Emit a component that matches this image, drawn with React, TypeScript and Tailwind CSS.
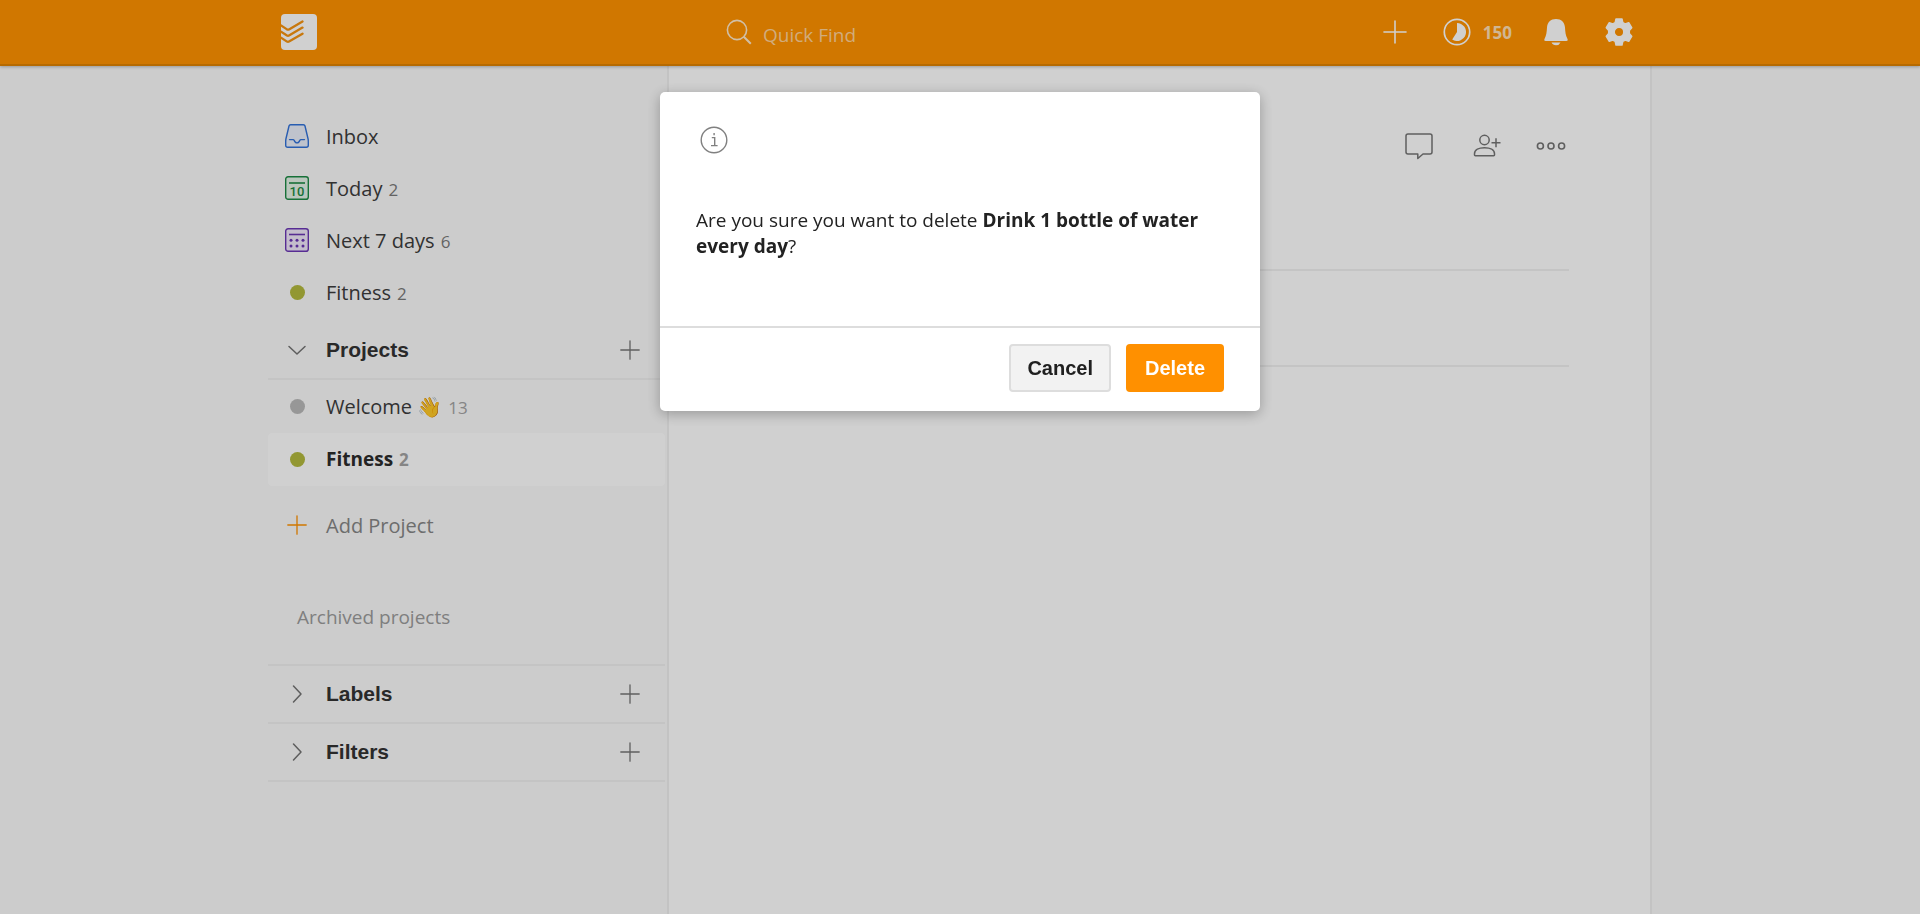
import type { ReactNode } from "react";

function PlusIcon({ className }: { className?: string }) {
  return (
    <svg viewBox="0 0 20 20" fill="none" stroke="currentColor" strokeWidth="1.3" strokeLinecap="round" className={className} aria-hidden="true">
      <path d="M10 .8v18.4M.8 10h18.4" />
    </svg>
  );
}

function Logo() {
  return (
    <svg viewBox="0 0 36 36" className="size-9" aria-hidden="true">
      <rect width="36" height="36" rx="4" fill="#fff" />
      <g fill="none" stroke="#f59310" strokeWidth="2.3" strokeLinejoin="round" strokeLinecap="round">
        <path d="M0 11.500l6 3.900q1 .6 2 0L21.500 7.500" />
        <path d="M0 17.600l6 3.900q1 .6 2 0L21.500 13.600" />
        <path d="M0 23.700l6 3.900q1 .6 2 0L21.500 19.700" />
      </g>
    </svg>
  );
}

function InboxIcon() {
  return (
    <svg viewBox="0 0 24 24" className="size-6" fill="none" stroke="#3272d9" strokeWidth="1.4" strokeLinejoin="round" strokeLinecap="round" aria-hidden="true">
      <path d="M5.600.7h12.800q1.300 0 1.600 1.300L23.100 15c.2 1 .2 2 .2 3v3.300q0 2-2 2H2.700q-2 0-2-2V18c0-1 0-2 .2-3L4 2Q4.300.7 5.600.7z" fill="#dbe6fa" fillOpacity=".5" />
      <path d="M4.500 15.600h3.600q.7 0 1 .7.900 2.600 2.900 2.600t2.900-2.600q.3-.7 1-.7h3.600" />
    </svg>
  );
}

function TodayIcon() {
  return (
    <svg viewBox="0 0 24 24" className="size-6" aria-hidden="true">
      <rect x=".7" y=".7" width="22.600" height="22.600" rx="2.400" fill="#dcf0e0" fillOpacity=".7" stroke="#1d8a45" strokeWidth="1.4" />
      <path d="M4 7h16" stroke="#1d8a45" strokeWidth="1.6" />
      <text x="12" y="19.700" textAnchor="middle" fontFamily="Roboto, sans-serif" fontWeight="500" fontSize="13" fill="#1d8a45">10</text>
    </svg>
  );
}

function WeekIcon() {
  return (
    <svg viewBox="0 0 24 24" className="size-6" aria-hidden="true">
      <rect x=".7" y=".7" width="22.600" height="22.600" rx="2.400" fill="#ece0fa" fillOpacity=".7" stroke="#6b37b5" strokeWidth="1.4" />
      <path d="M4 6.500h16" stroke="#6b37b5" strokeWidth="1.6" />
      <g fill="#6b37b5">
        <circle cx="6" cy="12.300" r="1.500" /><circle cx="12" cy="12.300" r="1.500" /><circle cx="18" cy="12.300" r="1.500" />
        <circle cx="6" cy="18" r="1.500" /><circle cx="12" cy="18" r="1.500" /><circle cx="18" cy="18" r="1.500" />
      </g>
    </svg>
  );
}

function Chevron({ open }: { open?: boolean }) {
  return (
    <svg viewBox="0 0 24 24" className="size-6" fill="none" stroke="#737373" strokeWidth="1.5" strokeLinecap="round" strokeLinejoin="round" aria-hidden="true">
      <path d={open ? "M4 8.500l8 7.500 8-7.500" : "M8.500 4l7.500 8-7.500 8"} />
    </svg>
  );
}

function Dot({ className }: { className: string }) {
  return (
    <span className="flex size-6 items-center justify-center">
      <span className={`size-[15px] rounded-full ${className}`} />
    </span>
  );
}

type NavRowProps = { icon: ReactNode; label: string; count?: number; active?: boolean; project?: boolean };

function NavRow({ icon, label, count, active, project }: NavRowProps) {
  return (
    <li>
      <a
        href="#"
        className={`flex items-center gap-[17px] rounded pl-[17px] ${project ? "h-[53px]" : "h-[52px]"} ${active ? "bg-white text-[19px] font-bold text-[#2b2b2b]" : "text-[20px] text-[#3d3d3d]"}`}
      >
        {icon}
        <span className={`flex items-baseline gap-1.5 ${project ? "" : "pt-0.5"}`}>
          <span>{label}</span>
          {count !== undefined && <span className={`text-[17px] ${project ? "text-[#a3a3a3]" : "text-[#7a7a7a]"}`}>{count}</span>}
        </span>
      </a>
    </li>
  );
}

function SectionHeader({ label, open }: { label: string; open?: boolean }) {
  return (
    <div className="flex h-[58px] items-center border-b-2 border-[#f1f1f1] pr-[25px] pl-[17px]">
      <button type="button" aria-expanded={!!open} className="flex flex-1 items-center gap-[17px] text-left font-['Liberation_Sans',sans-serif] text-[21px] font-bold text-[#333]">
        <Chevron open={open} />
        {label}
      </button>
      <button type="button" aria-label={`Add to ${label}`} className="text-[#757575]">
        <PlusIcon className="size-5" />
      </button>
    </div>
  );
}

function Header() {
  return (
    <header className="relative h-[66px] border-b-2 border-[#e08200] bg-[#ff9200] shadow-[0_1px_3px_rgba(0,0,0,0.25)]">
      <div className="mx-auto flex h-full max-w-[1384px] items-center pr-[19px] pl-[13px] text-white">
        <a href="#" aria-label="Home" className="mr-[409px]"><Logo /></a>
        <label className="flex items-center gap-[11px]">
          <svg viewBox="0 0 26 26" className="size-[26px] text-[#ffeacc]" fill="none" stroke="currentColor" strokeWidth="1.600" aria-hidden="true">
            <circle cx="11" cy="11" r="9.600" />
            <path d="M17.800 17.800l7 7" strokeWidth="2" />
          </svg>
          <input type="search" aria-label="Quick Find" placeholder="Quick Find" className="w-60 bg-transparent pt-1.5 text-[19px] outline-none placeholder:text-[#ffd399]" />
        </label>
        <div className="ml-auto flex items-center">
          <button type="button" aria-label="Add task" className="mr-9"><PlusIcon className="size-6" /></button>
          <button type="button" className="mr-8 flex items-center gap-3">
            <svg viewBox="0 0 28 28" className="size-7" aria-hidden="true">
              <circle cx="14" cy="14" r="12.700" fill="none" stroke="#fff" strokeWidth="1.700" />
              <path d="M14 5a9 9 0 1 1-4.800 16.600L14 14z" fill="#fff" />
            </svg>
            <span className="pt-0.5 text-[17px] font-bold text-[#ffe0b5]">150</span>
          </button>
          <button type="button" aria-label="Notifications" className="mr-[37px]">
            <svg viewBox="0 0 24 28" className="h-7 w-6" fill="#fff" aria-hidden="true">
              <path d="M12 1c5.300 0 8.700 3.300 9 8.500.300 5 .600 7.500 2.500 11.500.500 1.300.200 2-1.200 2H1.700C.300 23 0 22.300.500 21 2.400 17 2.700 14.500 3 9.500 3.300 4.300 6.700 1 12 1z" />
              <path d="M7.500 24.500h9q-1.300 2.800-4.500 2.800t-4.500-2.800z" />
            </svg>
          </button>
          <button type="button" aria-label="Settings">
            <svg viewBox="0 0 28 28" className="size-7" aria-hidden="true">
              <path fillRule="evenodd" fill="#fff" stroke="#fff" strokeWidth="1.500" strokeLinejoin="round" d="M11 1h6l.8 3.600 2.400 1.300 3.500-1.200 3 5-2.400 2.700v3.200l2.400 2.700-3 5-3.500-1.200-2.400 1.300L17 27h-6l-.8-3.600-2.400-1.300-3.500 1.200-3-5 2.400-2.700v-3.200L1.300 9.700l3-5 3.500 1.200 2.400-1.300zM14 9.200a4.800 4.800 0 1 0 0 9.600 4.800 4.800 0 0 0 0-9.600z" />
            </svg>
          </button>
        </div>
      </div>
    </header>
  );
}

function Sidebar() {
  return (
    <nav className="w-[399px] shrink-0 pt-11 pr-0.5">
      <ul className="pb-1">
        <NavRow icon={<InboxIcon />} label="Inbox" />
        <NavRow icon={<TodayIcon />} label="Today" count={2} />
        <NavRow icon={<WeekIcon />} label="Next 7 days" count={6} />
        <NavRow icon={<Dot className="bg-[#b3b93e]" />} label="Fitness" count={2} />
      </ul>
      <SectionHeader label="Projects" open />
      <ul>
        <NavRow icon={<Dot className="bg-[#bababa]" />} label="Welcome 👋" count={13} project />
        <NavRow icon={<Dot className="bg-[#b3b93e]" />} label="Fitness" count={2} active project />
      </ul>
      <button type="button" className="mt-3 flex h-[53px] w-full items-center gap-[17px] pl-[17px] text-[20px] text-[#868686]">
        <span className="flex size-6 items-center justify-center text-[#ff9200]"><PlusIcon className="size-5" /></span>
        <span className="pt-0.5">Add Project</span>
      </button>
      <a href="#" className="mt-10 block h-[53px] pl-[29px] text-[19px] leading-[52px] text-[#9c9c9c]">Archived projects</a>
      <div className="mt-5 border-t-2 border-[#f1f1f1]">
        <SectionHeader label="Labels" />
        <SectionHeader label="Filters" />
      </div>
    </nav>
  );
}

function ProjectView() {
  return (
    <main className="flex-1 border-x-2 border-[#f0f0f0] bg-white pr-[81px] pl-20">
      <div className="flex h-[205px] items-start justify-end border-b-2 border-[#f1f1f1] pt-[66px]">
        <div className="flex items-center pr-[3px] text-[#757575]">
          <button type="button" aria-label="Comments" className="mr-10">
            <svg viewBox="0 0 28 28" className="size-7" fill="none" stroke="currentColor" strokeWidth="1.500" strokeLinejoin="round" aria-hidden="true">
              <path d="M3 2h22q2 0 2 2v16q0 2-2 2h-7l-5.200 4.500V22H3q-2 0-2-2V4q0-2 2-2z" />
            </svg>
          </button>
          <button type="button" aria-label="Share" className="mr-[35px]">
            <svg viewBox="0 0 28 28" className="size-7" fill="none" stroke="currentColor" strokeWidth="1.500" strokeLinejoin="round" aria-hidden="true">
              <circle cx="11.500" cy="8" r="4.700" />
              <path d="M1.500 23v-1.300c0-4 4.500-6 10-6s10 2 10 6V23q0 .7-.8.700H2.300q-.8 0-.8-.7zM18.500 10.800h9M23 6.300v9" />
            </svg>
          </button>
          <button type="button" aria-label="More actions">
            <svg viewBox="0 0 30 28" className="h-7 w-[30px]" fill="none" stroke="currentColor" strokeWidth="1.600" aria-hidden="true">
              <circle cx="4.400" cy="14" r="3" /><circle cx="15" cy="14" r="3" /><circle cx="25.600" cy="14" r="3" />
            </svg>
          </button>
        </div>
      </div>
      <div className="h-24 border-b-2 border-[#f1f1f1]" />
    </main>
  );
}

function ConfirmDialog() {
  return (
    <div className="fixed inset-0 flex items-start justify-center bg-black/[0.184] pt-[92px]">
      <section role="alertdialog" aria-modal="true" aria-describedby="confirm-text" className="w-[600px] rounded-[5px] bg-white shadow-[0_3px_14px_rgba(0,0,0,0.28)]">
        <div className="px-9 pt-[34px] pb-[67px]">
          <svg viewBox="0 0 28 28" className="ml-1 size-7" fill="none" stroke="#808080" strokeWidth="1.400" aria-hidden="true">
            <circle cx="14" cy="14" r="12.800" />
            <path d="M11.800 11.600h2.900v8M11 19.600h6.600M14.100 7v2.200" />
          </svg>
          <p id="confirm-text" className="mt-[53px] text-[19px] leading-[26px] text-[#222]">
            Are you sure you want to delete <strong>Drink 1 bottle of water every day</strong>?
          </p>
        </div>
        <div className="flex justify-end gap-[15px] border-t-2 border-[#ddd] px-9 pt-4 pb-[19px] font-['Liberation_Sans',sans-serif] text-[20px] font-bold">
          <button type="button" className="h-12 rounded border-2 border-[#ddd] bg-[#f2f2f2] px-4 text-[#202020]">Cancel</button>
          <button type="button" className="h-12 rounded bg-[#ff9000] px-[19px] text-white">Delete</button>
        </div>
      </section>
    </div>
  );
}

export default function App() {
  return (
    <div className="flex min-h-screen flex-col bg-[#fafafa] font-['Open_Sans',sans-serif]">
      <Header />
      <div className="mx-auto flex w-full max-w-[1384px] flex-1">
        <Sidebar />
        <ProjectView />
      </div>
      <ConfirmDialog />
    </div>
  );
}
